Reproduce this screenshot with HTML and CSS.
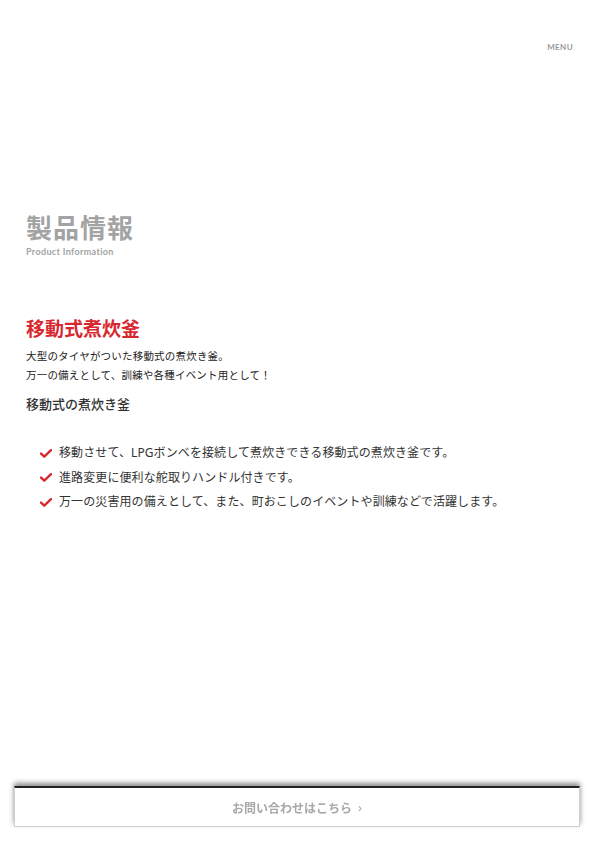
FILE: index.html
```html
<!DOCTYPE html>
<html lang="ja">
<head>
<meta charset="utf-8">
<title>製品情報</title>
<link rel="stylesheet" href="styles.css">
</head>
<body>
<header class="header">
  <span class="menu">MENU</span>
</header>
<main class="main">
  <section class="page-title">
    <h1 class="page-title-ja">製品情報</h1>
    <p class="page-title-en">Product Information</p>
  </section>
  <section class="product">
    <h2 class="product-name">移動式煮炊釜</h2>
    <p class="product-lead">大型のタイヤがついた移動式の煮炊き釜。<br>万一の備えとして、訓練や各種イベント用として！</p>
    <h3 class="product-sub">移動式の煮炊き釜</h3>
    <ul class="features">
      <li class="feature"><svg class="check" viewBox="0 0 12 9" width="12" height="9"><path d="M1 4.6 L4.3 7.6 L11 1.2" fill="none" stroke="#d7282f" stroke-width="2.4" stroke-linecap="round" stroke-linejoin="round"/></svg><span>移動させて、LPGボンベを接続して煮炊きできる移動式の煮炊き釜です。</span></li>
      <li class="feature"><svg class="check" viewBox="0 0 12 9" width="12" height="9"><path d="M1 4.6 L4.3 7.6 L11 1.2" fill="none" stroke="#d7282f" stroke-width="2.4" stroke-linecap="round" stroke-linejoin="round"/></svg><span>進路変更に便利な舵取りハンドル付きです。</span></li>
      <li class="feature"><svg class="check" viewBox="0 0 12 9" width="12" height="9"><path d="M1 4.6 L4.3 7.6 L11 1.2" fill="none" stroke="#d7282f" stroke-width="2.4" stroke-linecap="round" stroke-linejoin="round"/></svg><span>万一の災害用の備えとして、また、町おこしのイベントや訓練などで活躍します。</span></li>
    </ul>
  </section>
</main>
<a class="contact" href="#">お問い合わせはこちら<span class="chev">›</span></a>
</body>
</html>
```
FILE: styles.css
```css
* { box-sizing: border-box; }
html, body { margin: 0; padding: 0; background: #fff; }
body {
  font-family: "Noto Sans", "Noto Sans CJK JP", sans-serif;
  color: #333;
}
.header {
  display: flex;
  justify-content: flex-end;
  height: 100px;
  padding: 42px 21px 0 0;
}
.menu {
  font-family: "Lato", "Noto Sans", sans-serif;
  font-size: 8px;
  font-weight: 700;
  letter-spacing: 0.4px;
  color: #9a9a9a;
  line-height: 10px;
}
.main {
  padding: 0 26px;
}
.page-title {
  padding-top: 112px;
}
.page-title-ja {
  margin: 0;
  font-family: "Noto Sans CJK JP", sans-serif;
  font-size: 26px;
  line-height: 30px;
  font-weight: 700;
  color: #a3a3a3;
  letter-spacing: 1px;
}
.page-title-en {
  margin: 4px 0 0;
  font-family: "Lato", "Noto Sans", sans-serif;
  font-size: 9px;
  line-height: 12px;
  font-weight: 700;
  letter-spacing: 0.35px;
  color: #a3a3a3;
}
.product {
  padding-top: 58px;
}
.product-name {
  margin: 0;
  font-family: "Noto Sans CJK JP", sans-serif;
  font-size: 19px;
  line-height: 24px;
  font-weight: 700;
  color: #d7282f;
}
.product-lead {
  margin: 6px 0 0;
  font-family: "Noto Sans CJK JP", sans-serif;
  font-size: 10.5px;
  line-height: 19px;
  letter-spacing: 0.2px;
  color: #222;
}
.product-sub {
  margin: 10px 0 0;
  font-family: "Noto Sans CJK JP", sans-serif;
  font-size: 13px;
  line-height: 20px;
  font-weight: 500;
  color: #333;
}
.features {
  list-style: none;
  margin: 27px 0 0;
  padding: 0 0 0 14px;
}
.feature {
  display: flex;
  align-items: center;
  gap: 7px;
  font-family: "Noto Sans", "Noto Sans CJK JP", sans-serif;
  font-size: 12px;
  line-height: 24.5px;
  letter-spacing: 0.1px;
  color: #333;
}
.check { flex: none; }
.contact {
  position: fixed;
  left: 14px;
  right: 14px;
  bottom: 14px;
  height: 41px;
  display: flex;
  align-items: center;
  justify-content: center;
  gap: 6px;
  background: #fff;
  border: 1px solid #cfcfcf;
  border-top: 2px solid #222;
  box-shadow: 0 -3px 5px rgba(0,0,0,0.45);
  font-family: "Noto Sans CJK JP", sans-serif;
  font-size: 12px;
  font-weight: 700;
  color: #a8a8a8;
  text-decoration: none;
}
.chev {
  font-family: "Noto Sans", sans-serif;
  font-size: 13px;
  font-weight: 400;
}
```
